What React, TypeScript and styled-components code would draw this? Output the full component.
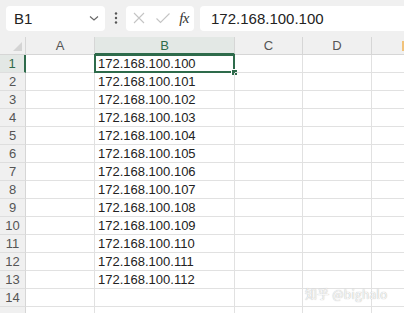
import React from "react";
import styled, { createGlobalStyle } from "styled-components";

const Global = createGlobalStyle`
  html, body { margin: 0; padding: 0; background: #ffffff; overflow: hidden; }
  body { font-family: "Liberation Sans", Arial, sans-serif; }
`;

const Page = styled.div`
  width: 404px;
  height: 313px;
  position: relative;
  overflow: hidden;
  background: #fff;
`;

const Toolbar = styled.div`
  height: 37px;
  box-sizing: border-box;
  background: #f0f0f0;
  display: flex;
  align-items: center;
  padding: 0 0 1px 6px;
`;

const NameBox = styled.div`
  width: 99px;
  height: 25px;
  box-sizing: border-box;
  background: #fff;
  border-radius: 4px;
  display: flex;
  align-items: center;
  justify-content: space-between;
  padding: 0 5px 0 8px;
  font-size: 15px;
  color: #222;
`;

const Dots = styled.div`
  width: 21px;
  display: flex;
  justify-content: center;
`;

const FxGroup = styled.div`
  width: 68px;
  height: 25px;
  box-sizing: border-box;
  background: #fff;
  border-radius: 4px;
  display: flex;
  align-items: center;
  justify-content: space-between;
  padding: 0 5px 0 6px;
`;

const Fx = styled.span`
  font-family: "Liberation Serif", "Times New Roman", serif;
  font-style: italic;
  font-size: 15px;
  color: #333;
  letter-spacing: -0.5px;
`;

const FormulaInput = styled.div`
  flex: 1;
  margin-left: 6px;
  height: 25px;
  background: #fff;
  border-radius: 4px 0 0 4px;
  display: flex;
  align-items: center;
  padding-left: 11px;
  font-size: 15px;
  color: #222;
`;

const Grid = styled.div`
  display: grid;
  grid-template-columns: 26px 69px 140px 68px 69px 70px;
  grid-auto-rows: 18px;
`;

const ColHead = styled.div<{ $sel?: boolean; $corner?: boolean }>`
  box-sizing: border-box;
  background: ${(p) => (p.$sel ? "#e3e8e5" : "#f0f0f0")};
  border-right: 1px solid #d6d6d6;
  border-bottom: ${(p) => (p.$sel ? "2px solid #2e6b4b" : "1px solid #d6d6d6")};
  display: flex;
  align-items: center;
  justify-content: center;
  font-size: 13px;
  color: ${(p) => (p.$sel ? "#2e6b4b" : "#555")};
  position: relative;
  ${(p) =>
    p.$corner
      ? `&::after{content:"";position:absolute;right:3px;bottom:3px;width:0;height:0;border-left:9px solid transparent;border-bottom:9px solid #d4d4d4;}`
      : ""}
`;

const EdgeMark = styled.span`
  position: absolute;
  left: 30px;
  top: 4px;
  width: 2px;
  height: 10px;
  background: #f1c27a;
`;

const RowHead = styled.div<{ $sel?: boolean }>`
  box-sizing: border-box;
  background: ${(p) => (p.$sel ? "#e3e8e5" : "#f0f0f0")};
  border-right: ${(p) => (p.$sel ? "2px solid #2e6b4b" : "1px solid #d6d6d6")};
  border-bottom: 1px solid #dedede;
  display: flex;
  align-items: center;
  justify-content: center;
  font-size: 13px;
  color: ${(p) => (p.$sel ? "#2e6b4b" : "#555")};
`;

const Cell = styled.div<{ $active?: boolean }>`
  box-sizing: border-box;
  border-right: 1px solid #e1e1e1;
  border-bottom: 1px solid #e1e1e1;
  font-size: 13px;
  color: #222;
  padding-left: 3px;
  display: flex;
  align-items: center;
  white-space: nowrap;
  position: relative;
  ${(p) =>
    p.$active
      ? `&::before{content:"";position:absolute;left:-1px;top:-1px;right:-1px;bottom:-1px;border:2px solid #2e6b4b;}
         &::after{content:"";position:absolute;right:-4px;bottom:-4px;width:5px;height:5px;background:#2e6b4b;border:1px solid #fff;}`
      : ""}
`;

const Watermark = styled.div`
  position: absolute;
  left: 305px;
  top: 285px;
  font-family: "Noto Sans CJK SC", "Liberation Sans", sans-serif;
  font-size: 12px;
  color: #f7f7f7;
  text-shadow: 0 0 1px #a0a0a0;
  letter-spacing: 0.2px;
`;

const cols = ["A", "B", "C", "D"];

export default function App() {
  const rows = Array.from({ length: 15 }, (_, i) => i + 1);
  return (
    <Page>
      <Global />
      <Toolbar>
        <NameBox>
          <span>B1</span>
          <svg width="12" height="12" viewBox="0 0 12 12">
            <path d="M2 4.5 L6 8 L10 4.5" fill="none" stroke="#666" strokeWidth="1.1" />
          </svg>
        </NameBox>
        <Dots>
          <svg width="4" height="14" viewBox="0 0 4 14">
            <circle cx="2" cy="2.5" r="1.2" fill="#555" />
            <circle cx="2" cy="7" r="1.2" fill="#555" />
            <circle cx="2" cy="11.5" r="1.2" fill="#555" />
          </svg>
        </Dots>
        <FxGroup>
          <svg width="14" height="14" viewBox="0 0 14 14">
            <path d="M2 2 L12 12 M12 2 L2 12" stroke="#c4c4c4" strokeWidth="1.1" fill="none" />
          </svg>
          <svg width="16" height="14" viewBox="0 0 16 14">
            <path d="M1.5 7.5 L5.5 11.5 L14.5 2.5" stroke="#c4c4c4" strokeWidth="1.1" fill="none" />
          </svg>
          <Fx>fx</Fx>
        </FxGroup>
        <FormulaInput>172.168.100.100</FormulaInput>
      </Toolbar>
      <Grid>
        <ColHead $corner />
        {cols.map((c) => (
          <ColHead key={c} $sel={c === "B"}>
            {c}
          </ColHead>
        ))}
        <ColHead>
          <EdgeMark />
        </ColHead>
        {rows.map((r) => (
          <React.Fragment key={r}>
            <RowHead $sel={r === 1}>{r <= 14 ? r : ""}</RowHead>
            <Cell />
            <Cell $active={r === 1}>{r <= 13 ? `172.168.100.${99 + r}` : ""}</Cell>
            <Cell />
            <Cell />
            <Cell />
          </React.Fragment>
        ))}
      </Grid>
      <Watermark>知乎 @bighalo</Watermark>
    </Page>
  );
}
